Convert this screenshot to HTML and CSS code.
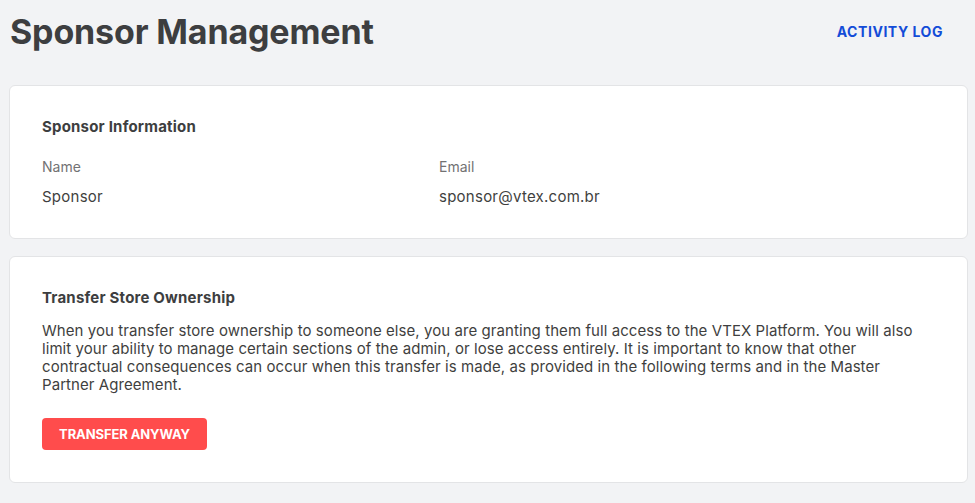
FILE: index.html
```html
<!DOCTYPE html>
<html lang="en">
<head>
<meta charset="utf-8">
<title>Sponsor Management</title>
<link rel="stylesheet" href="styles.css">
</head>
<body>
<div class="page">
  <header class="header">
    <h1 class="title">Sponsor Management</h1>
    <a class="activity" href="#">ACTIVITY LOG</a>
  </header>
  <section class="card card-info">
    <h2 class="card-title">Sponsor Information</h2>
    <div class="fields">
      <div class="field">
        <div class="label">Name</div>
        <div class="value">Sponsor</div>
      </div>
      <div class="field">
        <div class="label">Email</div>
        <div class="value">sponsor@vtex.com.br</div>
      </div>
    </div>
  </section>
  <section class="card card-transfer">
    <h2 class="card-title">Transfer Store Ownership</h2>
    <p class="desc">When you transfer store ownership to someone else, you are granting them full access to the VTEX Platform. You will also limit your ability to manage certain sections of the admin, or lose access entirely. It is important to know that other contractual consequences can occur when this transfer is made, as provided in the following terms and in the Master Partner Agreement.</p>
    <button class="btn-danger" type="button">TRANSFER ANYWAY</button>
  </section>
</div>
</body>
</html>
```
FILE: styles.css
```css
* { box-sizing: border-box; }
html, body { margin: 0; padding: 0; }
body {
  background: #f2f3f5;
  font-family: Inter, "Noto Sans", sans-serif;
  color: #3f3f40;
  width: 975px;
  height: 503px;
  overflow: hidden;
}
.page {
  padding: 0 7px 0 9px;
}
.header {
  display: flex;
  justify-content: space-between;
  align-items: center;
  height: 85px;
  padding-bottom: 23px;
}
.title {
  margin: 0 0 0 1px;
  font-size: 34px;
  font-weight: 700;
  color: #3d3e40;
  letter-spacing: -0.15px;
}
.activity {
  margin-right: 25px;
  font-size: 14px;
  font-weight: 700;
  color: #134cd8;
  text-decoration: none;
  letter-spacing: 0.55px;
}
.card {
  background: #fff;
  border: 1px solid #e3e4e6;
  border-radius: 6px;
  padding: 32px 32px 0 32px;
}
.card-info {
  height: 154px;
}
.card-transfer {
  margin-top: 17px;
  height: 227px;
}
.card-title {
  margin: 0;
  font-size: 15px;
  font-weight: 700;
  line-height: 18px;
  color: #3d3e40;
  letter-spacing: 0.2px;
}
.fields {
  display: grid;
  grid-template-columns: 397px 1fr;
  margin-top: 22px;
}
.label {
  font-size: 14px;
  line-height: 18px;
  color: #727273;
}
.value {
  margin-top: 12px;
  font-size: 15px;
  line-height: 18px;
  color: #3f3f40;
  letter-spacing: 0.25px;
}
.desc {
  margin: 15px 0 0 0;
  font-size: 15px;
  line-height: 18px;
  color: #3f3f40;
  letter-spacing: 0.07px;
  max-width: 890px;
}
.btn-danger {
  display: block;
  margin-top: 24px;
  width: 165px;
  height: 32px;
  border: 0;
  border-radius: 4px;
  background: #ff4c4c;
  color: #fff;
  font-family: Inter, "Noto Sans", sans-serif;
  font-size: 13px;
  font-weight: 700;
  letter-spacing: -0.1px;
}
```
